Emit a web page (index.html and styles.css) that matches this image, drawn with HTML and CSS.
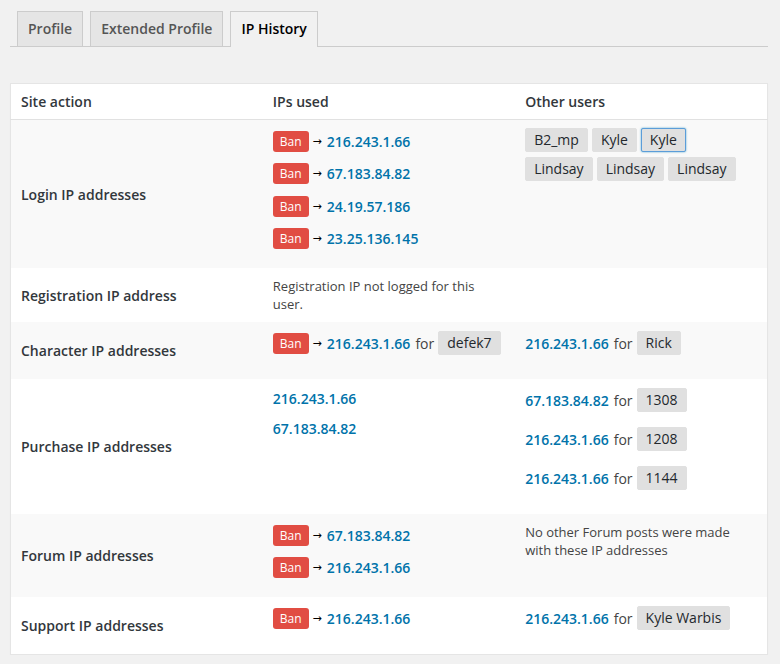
FILE: index.html
```html
<!DOCTYPE html>
<html lang="en">
<head>
<meta charset="utf-8">
<title>IP History</title>
<link rel="stylesheet" href="styles.css">
</head>
<body>
<div class="wrap">
  <nav class="tabs">
    <a class="tab">Profile</a>
    <a class="tab">Extended Profile</a>
    <a class="tab active">IP History</a>
  </nav>

  <table class="ip-table">
    <colgroup><col class="c"><col class="c"><col class="c"></colgroup>
    <thead>
      <tr><th>Site action</th><th>IPs used</th><th>Other users</th></tr>
    </thead>
    <tbody>
      <tr class="alt">
        <td class="label">Login IP addresses</td>
        <td>
          <div class="line"><span class="ban">Ban</span><span class="arrow">→</span><a class="ip">216.243.1.66</a></div>
          <div class="line"><span class="ban">Ban</span><span class="arrow">→</span><a class="ip">67.183.84.82</a></div>
          <div class="line"><span class="ban">Ban</span><span class="arrow">→</span><a class="ip">24.19.57.186</a></div>
          <div class="line"><span class="ban">Ban</span><span class="arrow">→</span><a class="ip">23.25.136.145</a></div>
        </td>
        <td class="users-cell">
          <div class="users">
            <span class="user">B2_mp</span><span class="user">Kyle</span><span class="user focus">Kyle</span>
            <span class="user">Lindsay</span><span class="user">Lindsay</span><span class="user">Lindsay</span>
          </div>
        </td>
      </tr>
      <tr>
        <td class="label">Registration IP address</td>
        <td><p class="note">Registration IP not logged for this user.</p></td>
        <td></td>
      </tr>
      <tr class="alt">
        <td class="label">Character IP addresses</td>
        <td>
          <div class="line uline"><span class="ban">Ban</span><span class="arrow">→</span><a class="ip">216.243.1.66</a><span class="for">for</span><span class="user">defek7</span></div>
        </td>
        <td>
          <div class="line uline"><a class="ip">216.243.1.66</a><span class="for">for</span><span class="user">Rick</span></div>
        </td>
      </tr>
      <tr>
        <td class="label">Purchase IP addresses</td>
        <td>
          <div class="line plain"><a class="ip">216.243.1.66</a></div>
          <div class="line plain"><a class="ip">67.183.84.82</a></div>
        </td>
        <td>
          <div class="line uline"><a class="ip">67.183.84.82</a><span class="for">for</span><span class="user">1308</span></div>
          <div class="line uline"><a class="ip">216.243.1.66</a><span class="for">for</span><span class="user">1208</span></div>
          <div class="line uline"><a class="ip">216.243.1.66</a><span class="for">for</span><span class="user">1144</span></div>
        </td>
      </tr>
      <tr class="alt">
        <td class="label">Forum IP addresses</td>
        <td>
          <div class="line"><span class="ban">Ban</span><span class="arrow">→</span><a class="ip">67.183.84.82</a></div>
          <div class="line"><span class="ban">Ban</span><span class="arrow">→</span><a class="ip">216.243.1.66</a></div>
        </td>
        <td><p class="note">No other Forum posts were made with these IP addresses</p></td>
      </tr>
      <tr>
        <td class="label">Support IP addresses</td>
        <td>
          <div class="line uline"><span class="ban">Ban</span><span class="arrow">→</span><a class="ip">216.243.1.66</a></div>
        </td>
        <td>
          <div class="line uline"><a class="ip">216.243.1.66</a><span class="for">for</span><span class="user">Kyle Warbis</span></div>
        </td>
      </tr>
    </tbody>
  </table>
</div>
</body>
</html>
```

FILE: styles.css
```css
html, body {
  margin: 0;
  padding: 0;
  background: #f1f1f1;
}
body {
  font-family: "Open Sans", "Noto Sans", "Liberation Sans", sans-serif;
  font-size: 14px;
  color: #32373c;
}
.wrap {
  padding: 11px 12px 0 10px;
}
.tabs {
  display: flex;
  align-items: flex-end;
  border-bottom: 1px solid #ccc;
  height: 35px;
}
.tab {
  display: block;
  margin-left: 7px;
  padding: 5px 10px;
  line-height: 24px;
  height: 24px;
  border: 1px solid #ccc;
  border-bottom: 0;
  background: #e5e5e5;
  color: #555;
  font-weight: 600;
  font-size: 14px;
  margin-bottom: 0;
}
.tab.active {
  background: #f1f1f1;
  color: #000;
  height: 25px;
  margin-bottom: -1px;
}
.ip-table {
  margin-top: 36px;
  width: 758px;
  table-layout: fixed;
  border-collapse: collapse;
  border: 1px solid #e5e5e5;
  background: #fff;
  box-shadow: 0 1px 1px rgba(0,0,0,.04);
}
.ip-table col.c { width: 33.333%; }
.ip-table th {
  text-align: left;
  font-weight: 600;
  font-size: 14px;
  line-height: 19px;
  padding: 8px 10px;
  color: #32373c;
  border-bottom: 1px solid #e1e1e1;
}
.ip-table td {
  padding: 9px 10px;
  vertical-align: top;
}
.ip-table td.label {
  vertical-align: middle;
  font-weight: 600;
  color: #32373c;
}
.ip-table td.users-cell {
  padding-top: 8px;
}
tr.alt td { background: #f9f9f9; }

.line {
  display: flex;
  align-items: center;
  height: 24px;
  margin-bottom: 8.5px;
  white-space: nowrap;
}
.line.uline { margin-bottom: 15px; }
.line.plain { height: 20px; margin-bottom: 10px; }
.line.plain:last-child { margin-bottom: 0; }

.ban {
  display: inline-block;
  height: 21px;
  line-height: 21px;
  padding: 0 7px;
  background: #e14d43;
  color: #fff;
  font-size: 12px;
  border-radius: 3px;
}
.arrow {
  font-family: "DejaVu Sans", sans-serif;
  font-size: 11px;
  color: #000;
  margin: 0 5px 0 4px;
}
.ip {
  color: #0073aa;
  font-weight: 600;
  text-decoration: none;
}
.for {
  color: #444;
  margin: 0 4px 0 5px;
}
.user {
  display: inline-block;
  height: 22px;
  line-height: 22px;
  padding: 0 8px;
  background: #e0e0e0;
  border: 1px solid #e0e0e0;
  border-radius: 2px;
  color: #23282d;
  font-size: 14px;
}
.user.focus {
  border-color: #5b9dd9;
  box-shadow: 0 0 2px rgba(30,140,190,.8);
}
.users {
  display: flex;
  flex-wrap: wrap;
  gap: 5px 4px;
}
.note {
  margin: 0;
  font-size: 13px;
  line-height: 18px;
  color: #444;
  max-width: 216px;
}
```
